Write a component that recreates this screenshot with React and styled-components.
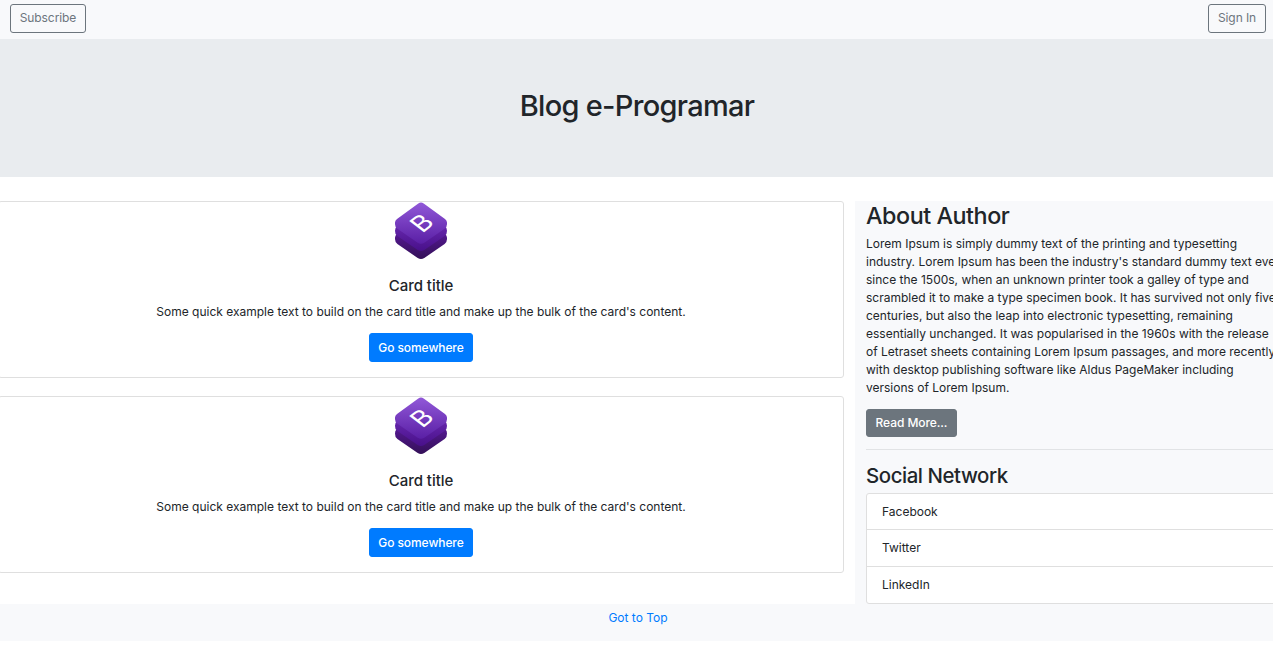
import React from "react";
import styled, { createGlobalStyle } from "styled-components";

const Global = createGlobalStyle`
  *, *::before, *::after { box-sizing: border-box; }
  html { overflow: hidden; }
  body {
    margin: 0;
    background: #fff;
    color: #212529;
    font: 400 12px/18px Inter, "Liberation Sans", sans-serif;
    letter-spacing: 0;
    overflow: hidden;
  }
`;

const Navbar = styled.nav`
  display: flex;
  justify-content: space-between;
  align-items: flex-start;
  height: 39px;
  padding: 4px 7px 0 10px;
  background: #f8f9fb;
`;

const variants = {
  outline: "background: transparent; border-color: #6c757d; color: #6c757d; padding-bottom: 2px;",
  primary: "background: #007bff; border-color: #007bff; color: #fff; font-weight: 500;",
  secondary: "background: #6c757d; border-color: #6c757d; color: #fff; font-weight: 500;",
};

const Button = styled.button`
  display: inline-flex;
  align-items: center;
  justify-content: center;
  width: ${(p) => p.$width}px;
  height: ${(p) => p.$height || 29}px;
  padding: 0;
  border: 1px solid;
  border-radius: 3px;
  font: inherit;
  letter-spacing: -0.08px;
  white-space: nowrap;
  ${(p) => variants[p.$variant]}
`;

const Jumbotron = styled.header`
  height: 138px;
  padding: 49px 0 0 1px;
  margin-bottom: 24px;
  background: #e9ecef;
  text-align: center;
`;

const PageTitle = styled.h1`
  margin: 0;
  font-size: 29px;
  line-height: 36px;
  font-weight: 500;
  letter-spacing: -0.7px;
`;

const Main = styled.main`
  display: flex;
  height: 403px;
`;

const Posts = styled.section`
  display: flex;
  flex: 0 0 846px;
  flex-direction: column;
  gap: 18px;
  margin: 0 11px 0 -2px;
`;

const Card = styled.article`
  display: flex;
  flex-direction: column;
  align-items: center;
  height: 177px;
  border: 1px solid #dfdfdf;
  border-radius: 3px;
`;

const CardBody = styled.div`
  display: flex;
  flex-direction: column;
  align-items: center;
  padding-top: 15px;
`;

const CardTitle = styled.h5`
  margin: 0 0 8px;
  font-size: 15px;
  line-height: 18px;
  font-weight: 500;
  letter-spacing: -0.05px;
`;

const CardText = styled.p`
  margin: 0 0 12px;
`;

const Sidebar = styled.aside`
  flex: 0 0 440px;
  padding-left: 11px;
  background: #f8f9fb;
`;

const SideTitle = styled.h2`
  margin: 0 0 5px;
  padding-top: 1px;
  font-size: ${(p) => p.$size}px;
  line-height: ${(p) => p.$line}px;
  font-weight: 500;
  letter-spacing: ${(p) => p.$spacing}px;
`;

const Bio = styled.p`
  margin: 0 0 12px;
  white-space: pre-line;
`;

const Divider = styled.hr`
  height: 1px;
  margin: 12px 0;
  border: 0;
  background: #e1e3e5;
`;

const List = styled.ul`
  margin: 0;
  padding: 0;
  list-style: none;
  background: #fff;
  border: 1px solid #dfdfdf;
  border-radius: 3px;
`;

const ListItem = styled.li`
  height: ${(p) => p.$height}px;
  padding: 9px 15px;
  & + & { border-top: 1px solid #dfdfdf; }
`;

const Footer = styled.footer`
  height: 37px;
  padding: 5px 0 0 3px;
  background: #f8f9fb;
  text-align: center;
`;

const TopLink = styled.a`
  color: #007bff;
  text-decoration: none;
`;

const LAYER =
  "M27.3 1.1 Q30 -0.7 32.7 1.1 L54 16.5 Q56.3 18.3 56 21 Q56.2 24.4 53.6 26.4 L33.3 40.4 Q30 42.4 26.7 40.4 L6.4 26.4 Q3.8 24.4 4 21 Q3.7 18.3 6 16.5 Z";

function StackLogo() {
  return (
    <svg width="60" height="60" viewBox="0 0 60 60" aria-hidden="true">
      <defs>
        <linearGradient id="top" x1="0" y1="0" x2="0" y2="1">
          <stop offset="0" stopColor="#9158d8" />
          <stop offset="1" stopColor="#5a1fa5" />
        </linearGradient>
        <linearGradient id="middle" x1="0" y1="0" x2="0" y2="1">
          <stop offset="0.4" stopColor="#6526ab" />
          <stop offset="1" stopColor="#48108a" />
        </linearGradient>
        <linearGradient id="bottom" x1="0" y1="0" x2="0" y2="1">
          <stop offset="0.4" stopColor="#53188f" />
          <stop offset="1" stopColor="#341058" />
        </linearGradient>
      </defs>
      <path d={LAYER} fill="url(#bottom)" transform="translate(0 15.6)" />
      <path d={LAYER} fill="url(#middle)" transform="translate(0 7.7)" />
      <path d={LAYER} fill="url(#top)" transform="translate(0 0.4)" />
      <text
        x="0"
        y="9.3"
        textAnchor="middle"
        fontFamily="Inter, sans-serif"
        fontSize="26"
        fontWeight="400"
        fill="#fff"
        transform="translate(30.6 21) scale(1.1 0.84) rotate(-45)"
      >
        B
      </text>
    </svg>
  );
}

function Post() {
  return (
    <Card>
      <StackLogo />
      <CardBody>
        <CardTitle>Card title</CardTitle>
        <CardText>
          Some quick example text to build on the card title and make up the bulk of the card's content.
        </CardText>
        <Button $variant="primary" $width={104}>Go somewhere</Button>
      </CardBody>
    </Card>
  );
}

const bio = `Lorem Ipsum is simply dummy text of the printing and typesetting
industry. Lorem Ipsum has been the industry's standard dummy text ever
since the 1500s, when an unknown printer took a galley of type and
scrambled it to make a type specimen book. It has survived not only five
centuries, but also the leap into electronic typesetting, remaining
essentially unchanged. It was popularised in the 1960s with the release
of Letraset sheets containing Lorem Ipsum passages, and more recently
with desktop publishing software like Aldus PageMaker including
versions of Lorem Ipsum.`;

export default function App() {
  return (
    <>
      <Global />
      <Navbar>
        <Button $variant="outline" $width={76}>Subscribe</Button>
        <Button $variant="outline" $width={58}>Sign In</Button>
      </Navbar>
      <Jumbotron>
        <PageTitle>Blog e-Programar</PageTitle>
      </Jumbotron>
      <Main>
        <Posts>
          <Post />
          <Post />
        </Posts>
        <Sidebar>
          <SideTitle $size={23.3} $line={28} $spacing={-0.45}>About Author</SideTitle>
          <Bio>{bio}</Bio>
          <Button $variant="secondary" $width={91} $height={28}>Read More...</Button>
          <Divider />
          <SideTitle $size={20.4} $line={25} $spacing={-0.43}>Social Network</SideTitle>
          <List>
            <ListItem $height={35}>Facebook</ListItem>
            <ListItem $height={37}>Twitter</ListItem>
            <ListItem $height={37}>LinkedIn</ListItem>
          </List>
        </Sidebar>
      </Main>
      <Footer>
        <TopLink href="#top">Got to Top</TopLink>
      </Footer>
    </>
  );
}
